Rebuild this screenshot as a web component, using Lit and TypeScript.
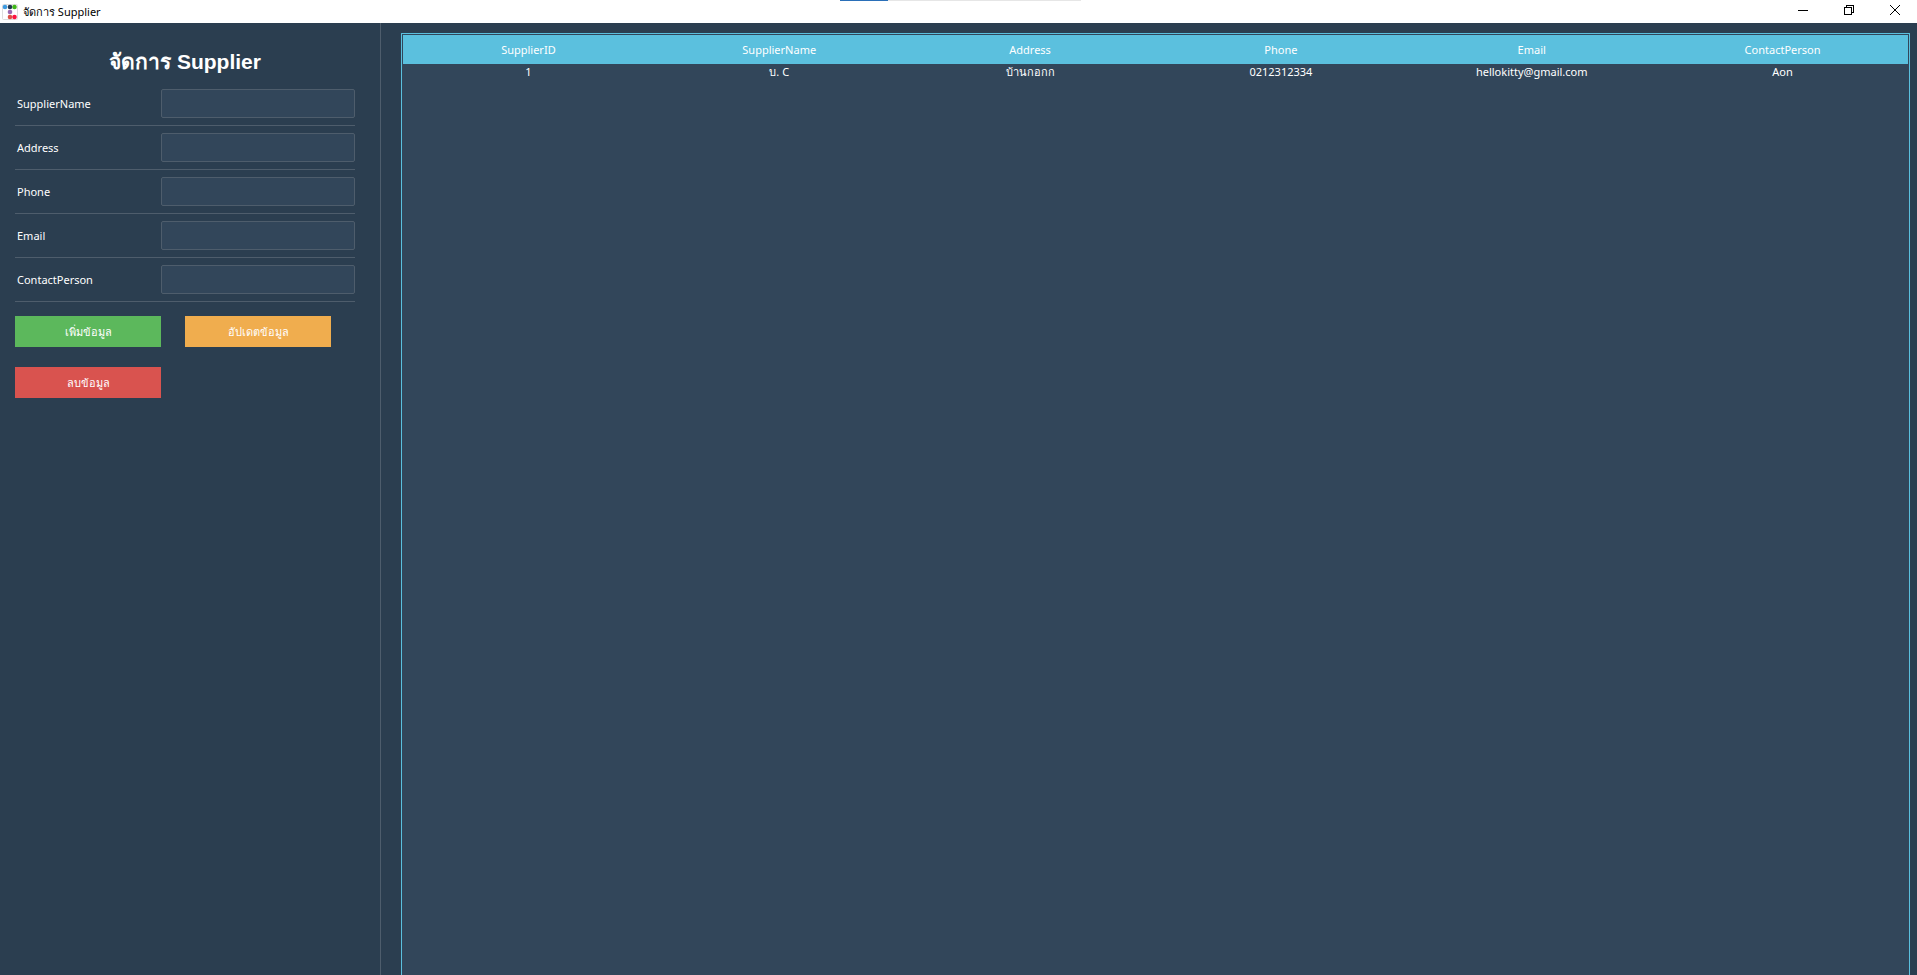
import { LitElement, html, css, svg } from "lit";
import { customElement, state } from "lit/decorators.js";

interface Supplier {
  SupplierID: string;
  SupplierName: string;
  Address: string;
  Phone: string;
  Email: string;
  ContactPerson: string;
}

const FIELDS: (keyof Supplier)[] = ["SupplierName", "Address", "Phone", "Email", "ContactPerson"];
const COLUMNS: (keyof Supplier)[] = ["SupplierID", ...FIELDS];

const LOGO_DOTS: [number, number, string][] = [
  [3, 3, "#3f9be0"],
  [8, 3, "#22374f"],
  [12.5, 3, "#3fb618"],
  [8, 8, "#9b6bb3"],
  [8, 13, "#dd5145"],
  [12.5, 13, "#fb1440"],
];

@customElement("title-bar")
export class TitleBar extends LitElement {
  static styles = css`
    :host {
      display: flex;
      position: relative;
      height: 23px;
      flex: none;
      align-items: center;
      background: #fff;
      color: #000;
      font: 11px/16px "Noto Sans", "Open Sans", sans-serif;
    }
    .logo {
      margin-left: 2px;
    }
    .name {
      flex: 1;
      padding-left: 5px;
    }
    .progress {
      position: absolute;
      top: 0;
      left: 43.8%;
      width: 12.6%;
      height: 1px;
      background: #e6e6e6;
    }
    .progress-value {
      width: 20%;
      height: 1px;
      background: #2a6fb8;
    }
    .control {
      display: flex;
      width: 46px;
      height: 23px;
      padding: 0 0 3px 2px;
      align-items: center;
      justify-content: center;
      border: 0;
      background: none;
    }
    .controls {
      display: flex;
    }
  `;

  render() {
    return html`
      <svg class="logo" width="16" height="16" viewBox="0 0 16 16">
        <rect x="0.5" y="0.5" width="15" height="15" rx="1" fill="#fff" stroke="#ddd" />
        ${LOGO_DOTS.map(([x, y, c]) => svg`<circle cx=${x} cy=${y} r="2.3" fill=${c} />`)}
      </svg>
      <span class="name">จัดการ Supplier</span>
      <div class="progress"><div class="progress-value"></div></div>
      <div class="controls">
        <button class="control" aria-label="Minimize">
          <svg width="10" height="10" shape-rendering="crispEdges"><path d="M0 5.5H10" stroke="#000" /></svg>
        </button>
        <button class="control" aria-label="Restore">
          <svg width="10" height="10" fill="none" stroke="#000" shape-rendering="crispEdges">
            <path d="M0.5 2.5H7.5V9.5H0.5ZM2.5 2.5V0.5H9.5V7.5H7.5" />
          </svg>
        </button>
        <button class="control" aria-label="Close">
          <svg width="10" height="10" stroke="#000"><path d="M0 0L10 10M10 0L0 10" /></svg>
        </button>
      </div>
    `;
  }
}

@customElement("supplier-form")
export class SupplierForm extends LitElement {
  static styles = css`
    :host {
      display: block;
      box-sizing: border-box;
      width: 381px;
      flex: none;
      padding: 24px 25px 0 15px;
      border-right: 1px solid #4e5d6c;
      color: #fff;
      font: 11px/16px "Noto Sans", "Open Sans", sans-serif;
    }
    .title {
      margin: 0 0 12px;
      text-align: center;
      font: bold 21px/30px "Liberation Sans", Arial, sans-serif;
    }
    .field {
      display: grid;
      grid-template-columns: 146px 1fr;
      height: 29px;
      align-items: center;
      margin-bottom: 7px;
      padding-bottom: 7px;
      border-bottom: 1px solid #4e5d6c;
    }
    .label {
      padding-left: 2px;
    }
    .input {
      box-sizing: border-box;
      width: 100%;
      height: 29px;
      padding: 0 6px;
      border: 1px solid #4e5d6c;
      border-radius: 2px;
      background: #32465a;
      color: #fff;
      font: inherit;
      outline: 0;
    }
    .actions {
      display: grid;
      grid-template-columns: 146px 146px;
      gap: 20px 24px;
      margin-top: 14px;
    }
    .action {
      height: 31px;
      padding: 0;
      border: 0;
      color: #fff;
      font: inherit;
    }
    .add {
      background: #5cb85c;
    }
    .update {
      background: #f0ad4e;
    }
    .delete {
      background: #d9534f;
    }
  `;

  render() {
    return html`
      <h1 class="title">จัดการ Supplier</h1>
      ${FIELDS.map(
        (name) => html`
          <div class="field">
            <label class="label" for=${name}>${name}</label>
            <input class="input" id=${name} type="text" />
          </div>
        `,
      )}
      <div class="actions">
        <button class="action add">เพิ่มข้อมูล</button>
        <button class="action update">อัปเดตข้อมูล</button>
        <button class="action delete">ลบข้อมูล</button>
      </div>
    `;
  }
}

@customElement("app-root")
export class AppRoot extends LitElement {
  static styles = css`
    :host {
      display: flex;
      flex-direction: column;
      height: 100vh;
      overflow: hidden;
      background: #2b3e50;
      color: #fff;
      font: 11px/16px "Noto Sans", "Open Sans", sans-serif;
    }
    .body {
      display: flex;
      flex: 1;
      min-height: 0;
    }
    .panel {
      flex: 1;
      margin: 10px 7px 0 20px;
      padding: 1px 1px 0;
      border: 1px solid #5bc0de;
      border-bottom: 0;
      border-radius: 1px 1px 0 0;
      background: #32465a;
    }
    .table {
      width: 100%;
      table-layout: fixed;
      border-collapse: collapse;
    }
    .head {
      height: 29px;
      padding: 0;
      background: #5bc0de;
      font-weight: normal;
    }
    .cell {
      height: 16px;
      padding: 0;
      text-align: center;
    }
  `;

  @state()
  private suppliers: Supplier[] = [
    {
      SupplierID: "1",
      SupplierName: "บ. C",
      Address: "บ้านกอกก",
      Phone: "0212312334",
      Email: "hellokitty@gmail.com",
      ContactPerson: "Aon",
    },
  ];

  render() {
    return html`
      <title-bar></title-bar>
      <div class="body">
        <supplier-form></supplier-form>
        <div class="panel">
          <table class="table">
            <thead>
              <tr>
                ${COLUMNS.map((c) => html`<th class="head" scope="col">${c}</th>`)}
              </tr>
            </thead>
            <tbody>
              ${this.suppliers.map(
                (s) => html`<tr>${COLUMNS.map((c) => html`<td class="cell">${s[c]}</td>`)}</tr>`,
              )}
            </tbody>
          </table>
        </div>
      </div>
    `;
  }
}
